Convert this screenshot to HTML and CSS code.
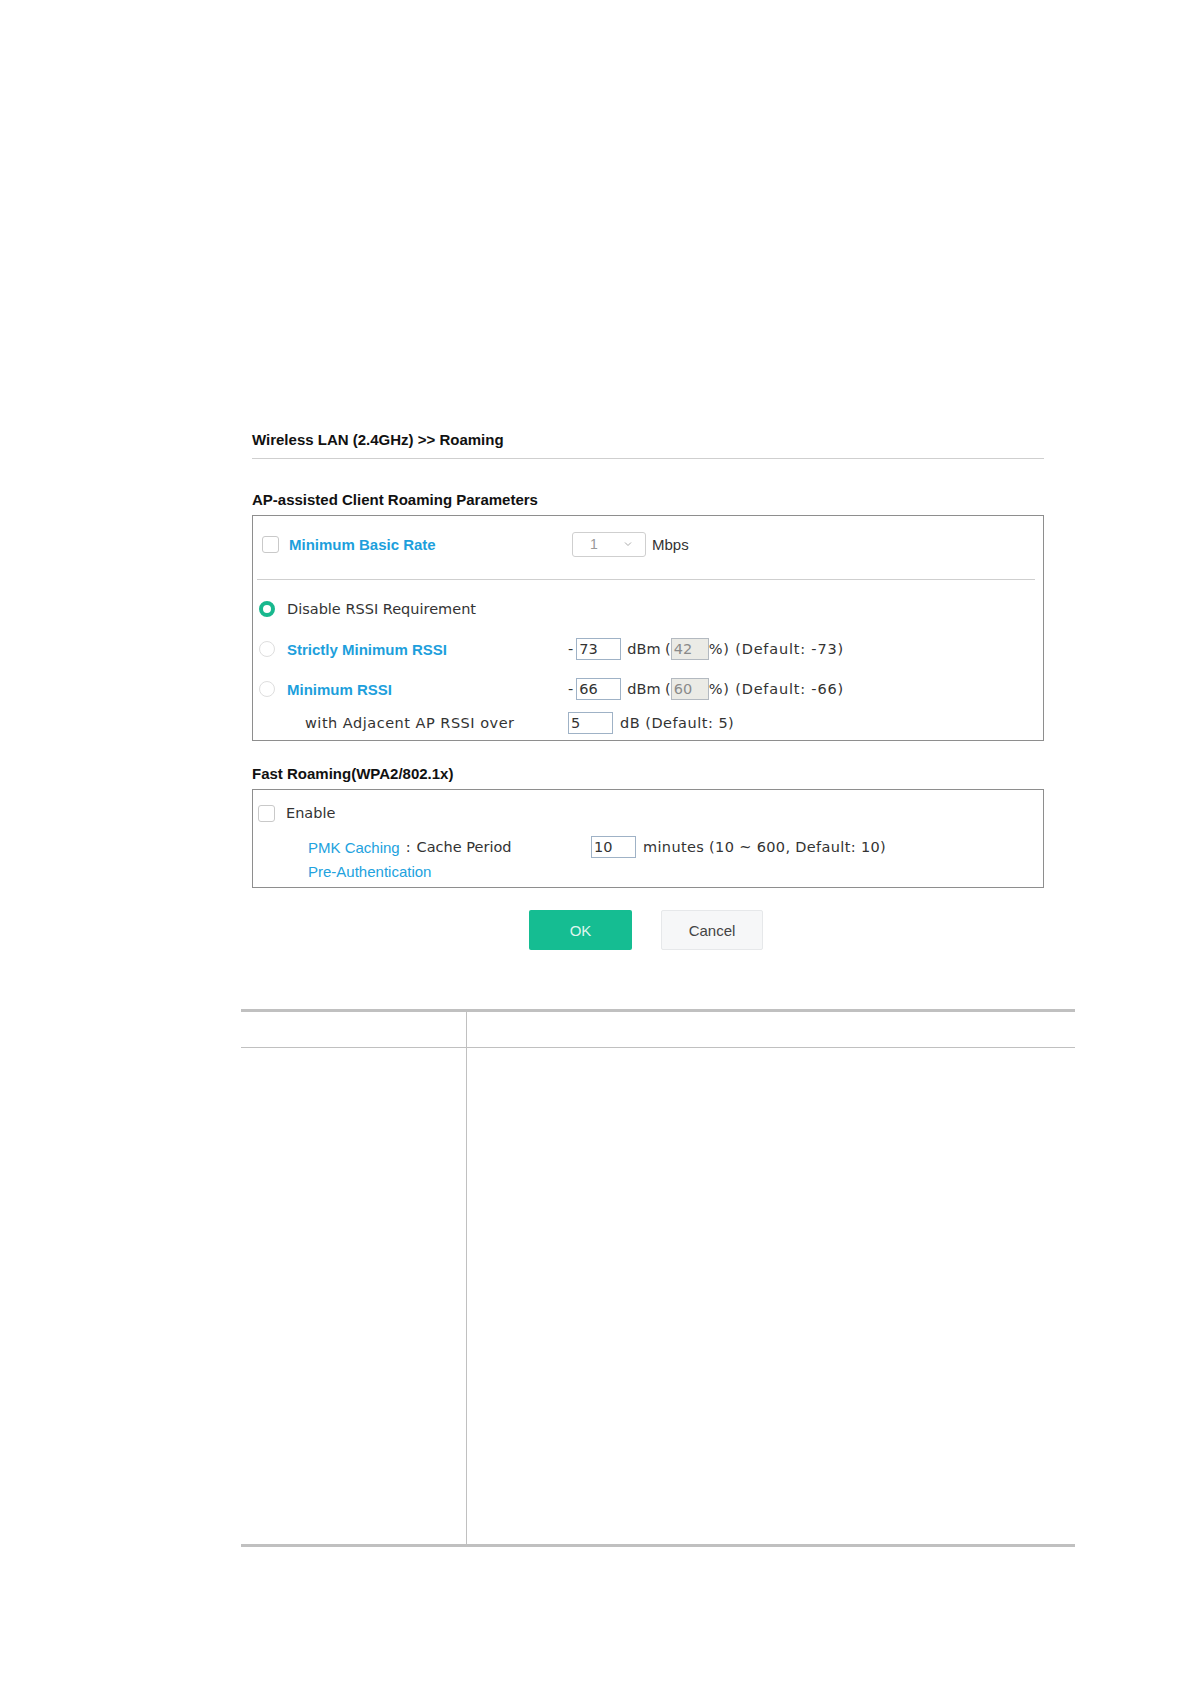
FILE: index.html
```html
<!DOCTYPE html>
<html>
<head>
<meta charset="utf-8">
<link rel="stylesheet" href="styles.css">
</head>
<body>
<div class="page">
  <div class="content">
    <div class="page-title">Wireless LAN (2.4GHz) &gt;&gt; Roaming</div>
    <div class="section-title first">AP-assisted Client Roaming Parameters</div>
    <div class="box box-ap">
      <div class="row row-rate">
        <div class="label-cell">
          <span class="checkbox cb-rate"></span>
          <span class="blue-bold">Minimum Basic Rate</span>
        </div>
        <div class="value-cell">
          <span class="select"><span class="sel-val">1</span><svg class="chev" width="8" height="6" viewBox="0 0 8 6"><path d="M1 1.5 L4 4.5 L7 1.5" fill="none" stroke="#aaa" stroke-width="1"/></svg></span>
          <span class="plain sans">Mbps</span>
        </div>
      </div>
      <div class="sep"></div>
      <div class="row row-disable">
        <div class="label-cell">
          <span class="radio checked"></span>
          <span class="plain">Disable RSSI Requirement</span>
        </div>
      </div>
      <div class="row row-strict">
        <div class="label-cell">
          <span class="radio"></span>
          <span class="blue-bold">Strictly Minimum RSSI</span>
        </div>
        <div class="value-cell">
          <span class="plain dash">-</span><span class="input">73</span><span class="plain gap-l">dBm (</span><span class="input pct">42</span><span class="plain wide">%) (Default: -73)</span>
        </div>
      </div>
      <div class="row row-min">
        <div class="label-cell">
          <span class="radio"></span>
          <span class="blue-bold">Minimum RSSI</span>
        </div>
        <div class="value-cell">
          <span class="plain dash">-</span><span class="input">66</span><span class="plain gap-l">dBm (</span><span class="input pct">60</span><span class="plain wide">%) (Default: -66)</span>
        </div>
      </div>
      <div class="row row-adj">
        <div class="label-cell indent-adj">
          <span class="plain adj">with Adjacent AP RSSI over</span>
        </div>
        <div class="value-cell">
          <span class="input">5</span><span class="plain gap-s mid">dB (Default: 5)</span>
        </div>
      </div>
    </div>

    <div class="section-title second">Fast Roaming(WPA2/802.1x)</div>
    <div class="box box-fast">
      <div class="row row-enable">
        <span class="checkbox cb-enable"></span>
        <span class="plain">Enable</span>
      </div>
      <div class="row row-pmk">
        <div class="pmk-label">
          <span class="blue sans">PMK Caching</span><span class="plain colon">:</span><span class="plain">Cache Period</span>
        </div>
        <div class="value-cell">
          <span class="input">10</span><span class="plain gap-s narrow">minutes (10 ~ 600, Default: 10)</span>
        </div>
      </div>
      <div class="row row-pre">
        <span class="blue sans">Pre-Authentication</span>
      </div>
    </div>

    <div class="buttons">
      <span class="btn btn-ok">OK</span>
      <span class="btn btn-cancel">Cancel</span>
    </div>
  </div>

  <div class="grid-table">
    <div class="gt-head">
      <div class="gt-c1"></div>
      <div class="gt-c2"></div>
    </div>
    <div class="gt-body">
      <div class="gt-c1"></div>
      <div class="gt-c2"></div>
    </div>
  </div>
</div>
</body>
</html>
```

FILE: styles.css
```css
html, body {
  margin: 0;
  padding: 0;
  background: #ffffff;
}

.page {
  padding-top: 431px;
  padding-bottom: 100px;
}

.content {
  margin-left: 252px;
  width: 792px;
}

.page-title {
  font-family: "Liberation Sans", Arial, sans-serif;
  font-weight: bold;
  font-size: 15px;
  line-height: 18px;
  color: #111;
  padding-bottom: 9px;
  border-bottom: 1px solid #cfcfcf;
}

.section-title {
  font-family: "Liberation Sans", Arial, sans-serif;
  font-weight: bold;
  font-size: 15px;
  line-height: 18px;
  color: #111;
}

.section-title.first {
  margin-top: 32px;
  margin-bottom: 6px;
}

.section-title.second {
  margin-top: 24px;
  margin-bottom: 6px;
}

.box {
  border: 1px solid #8e8e8e;
}

.row {
  display: flex;
  align-items: center;
  height: 26px;
}

.label-cell {
  display: flex;
  align-items: center;
  width: 315px;
  flex: none;
}

.value-cell {
  display: flex;
  align-items: center;
}

.plain {
  font-family: "DejaVu Sans", Verdana, sans-serif;
  font-size: 14.5px;
  color: #333;
  white-space: pre;
}

.plain.sans, .sans {
  font-family: "Liberation Sans", Arial, sans-serif;
  font-size: 15px;
}

.wide {
  letter-spacing: 0.8px;
}

.mid {
  letter-spacing: 0.5px;
}

.narrow {
  letter-spacing: 0.35px;
}

.adj {
  letter-spacing: 0.5px;
}

.dash {
  margin-right: 3px;
}

.blue-bold {
  font-family: "Liberation Sans", Arial, sans-serif;
  font-weight: bold;
  font-size: 15px;
  color: #1d9fdc;
  white-space: pre;
}

.blue {
  color: #22a2de;
  white-space: pre;
}

.checkbox {
  display: inline-block;
  box-sizing: border-box;
  width: 17px;
  height: 17px;
  border: 1px solid #c9c9c9;
  border-radius: 3px;
  background: #fff;
  flex: none;
}

.radio {
  display: inline-block;
  box-sizing: border-box;
  width: 16px;
  height: 16px;
  border: 1px solid #dedede;
  border-radius: 50%;
  background: #fff;
  flex: none;
  margin-left: 6px;
  margin-right: 12px;
}

.radio.checked {
  border: 4.5px solid #18b88e;
  background: #fff;
}

/* row 1 */
.row-rate {
  margin-top: 15px;
  margin-bottom: 22px;
}

.cb-rate {
  margin-left: 9px;
  margin-right: 10px;
}

.select {
  display: inline-flex;
  align-items: center;
  box-sizing: border-box;
  width: 74px;
  height: 25px;
  border: 1px solid #cfcfcf;
  border-radius: 3px;
  margin-left: 4px;
  margin-right: 6px;
}

.sel-val {
  font-family: "Liberation Sans", Arial, sans-serif;
  font-size: 14px;
  color: #999;
  margin-left: 17px;
}

.chev {
  margin-left: 26px;
}

.sep {
  height: 1px;
  background: #cfcfcf;
  margin-left: 4px;
  margin-right: 8px;
}

.row-disable {
  margin-top: 16px;
}

.row-strict {
  margin-top: 14px;
}

.row-min {
  margin-top: 14px;
}

.row-adj {
  margin-top: 8px;
  margin-bottom: 4px;
}

.indent-adj {
  padding-left: 52px;
  width: 263px;
}

.input {
  display: inline-block;
  box-sizing: border-box;
  width: 45px;
  height: 22px;
  border: 1px solid #9fb2c6;
  background: #fff;
  font-family: "DejaVu Sans", Verdana, sans-serif;
  font-size: 14.5px;
  line-height: 20px;
  color: #333;
  padding-left: 2px;
  flex: none;
}

.input.pct {
  width: 38px;
  background: #ebebe6;
  border-color: #b3b9c0;
  color: #8a8a8a;
}

.gap-l {
  margin-left: 6px;
}

.gap-s {
  margin-left: 7px;
}

/* fast roaming */
.row-enable {
  margin-top: 10px;
}

.cb-enable {
  margin-left: 5px;
  margin-right: 11px;
}

.row-pmk {
  margin-top: 8px;
}

.pmk-label {
  display: flex;
  align-items: center;
  padding-left: 55px;
  width: 283px;
  flex: none;
}

.colon {
  margin-left: 6px;
  margin-right: 6px;
}

.row-pre {
  height: 20px;
  margin-top: 1px;
  margin-bottom: 6px;
  padding-left: 55px;
}

/* buttons */
.buttons {
  display: flex;
  justify-content: center;
  gap: 29px;
  margin-top: 22px;
  padding-right: 4px;
}

.btn {
  display: flex;
  align-items: center;
  justify-content: center;
  box-sizing: border-box;
  height: 40px;
  font-family: "Liberation Sans", Arial, sans-serif;
  font-size: 15px;
  border-radius: 2px;
}

.btn-ok {
  width: 103px;
  background: #15bd92;
  color: #dff6ef;
}

.btn-cancel {
  width: 102px;
  background: #f6f7f8;
  border: 1px solid #e6e8ea;
  color: #444;
}

/* bottom table */
.grid-table {
  margin-top: 59px;
  margin-left: 241px;
  width: 834px;
  border-top: 3px solid #c0c0c0;
  border-bottom: 3px solid #c0c0c0;
}

.gt-head, .gt-body {
  display: grid;
  grid-template-columns: 226px 1fr;
}

.gt-head {
  height: 35px;
  border-bottom: 1px solid #c0c0c0;
}

.gt-body {
  height: 496px;
}

.gt-c1 {
  border-right: 1px solid #c0c0c0;
}
```
